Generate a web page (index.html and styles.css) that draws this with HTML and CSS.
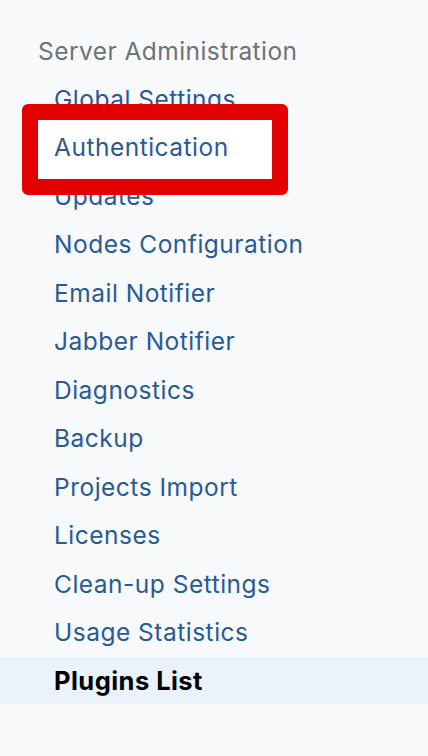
FILE: index.html
```html
<!DOCTYPE html>
<html>
<head>
<meta charset="utf-8">
<link rel="stylesheet" href="styles.css">
</head>
<body>
<nav class="sidebar">
  <div class="section-title">Server Administration</div>
  <ul class="menu">
    <li><a href="#">Global Settings</a></li>
    <li><a href="#" class="raised">Authentication</a></li>
    <li><a href="#">Updates</a></li>
    <li><a href="#">Nodes Configuration</a></li>
    <li><a href="#">Email Notifier</a></li>
    <li><a href="#">Jabber Notifier</a></li>
    <li><a href="#">Diagnostics</a></li>
    <li><a href="#">Backup</a></li>
    <li><a href="#">Projects Import</a></li>
    <li><a href="#">Licenses</a></li>
    <li><a href="#">Clean-up Settings</a></li>
    <li><a href="#">Usage Statistics</a></li>
    <li class="active"><a href="#">Plugins List</a></li>
  </ul>
  <div class="highlight-box"></div>
</nav>
</body>
</html>
```
FILE: styles.css
```css
html, body {
  margin: 0;
  padding: 0;
  background: #f7f9fb;
}
body {
  font-family: Inter, "Noto Sans", sans-serif;
  width: 428px;
  height: 756px;
  overflow: hidden;
}
.sidebar {
  position: relative;
  padding-top: 26.5px;
}
.section-title {
  height: 48px;
  line-height: 48px;
  padding-left: 38px;
  font-size: 24.5px;
  letter-spacing: 0.45px;
  color: #6f7276;
}
.menu {
  list-style: none;
  margin: 0;
  padding: 0;
}
.menu li {
  height: 48.5px;
  line-height: 48.5px;
  padding-left: 54px;
}
.menu a {
  font-size: 24.5px;
  letter-spacing: 0.5px;
  color: #2a5a94;
  text-decoration: none;
}
.menu a.raised {
  position: relative;
  z-index: 2;
}
.menu li.active {
  height: 47.5px;
  background: #eaf2fc;
}
.menu li.active a {
  color: #000;
  font-size: 25.5px;
  font-weight: 700;
  letter-spacing: 0.45px;
}
.highlight-box {
  position: absolute;
  left: 22px;
  top: 104px;
  width: 234px;
  height: 59px;
  border: 16px solid #e30000;
  border-radius: 6px;
  background: #fff;
  z-index: 1;
}
```
